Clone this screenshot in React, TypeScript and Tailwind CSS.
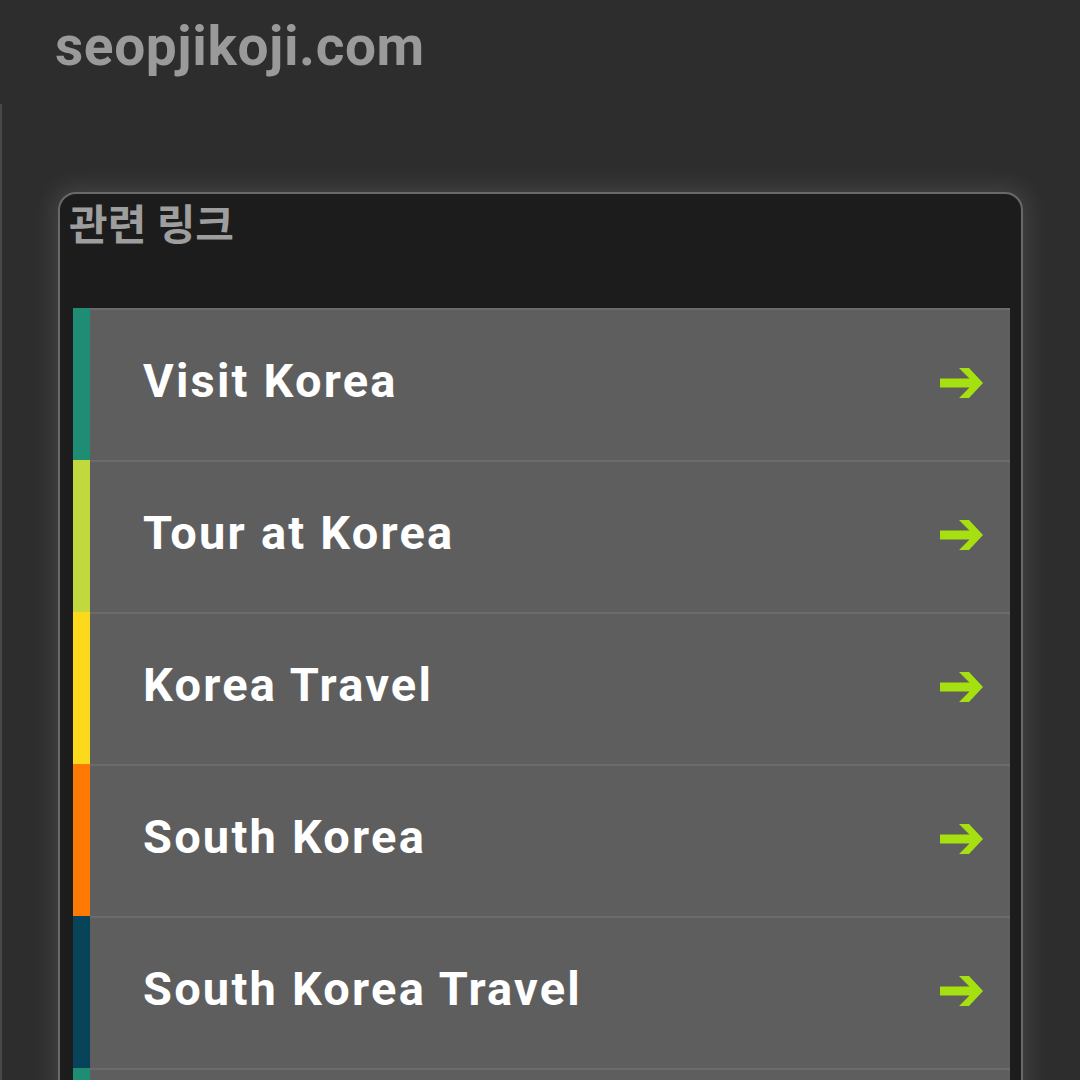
import React from "react";

interface LinkItem {
  label: string;
  stripe: string;
}

const links: LinkItem[] = [
  { label: "Visit Korea", stripe: "bg-[#1f8c74]" },
  { label: "Tour at Korea", stripe: "bg-[#c1d93c]" },
  { label: "Korea Travel", stripe: "bg-[#fdd91c]" },
  { label: "South Korea", stripe: "bg-[#ff7a05]" },
  { label: "South Korea Travel", stripe: "bg-[#07445a]" },
  { label: "Korea Tourism", stripe: "bg-[#1f8c74]" },
];

const Arrow = () => (
  <svg width="43" height="30" viewBox="0 0 43 30" aria-hidden="true">
    <polygon
      points="0,10.5 29.5,10.5 19,0 29,0 43,15 29,30 19,30 29.5,19.5 0,19.5"
      fill="#a6e010"
    />
  </svg>
);

const LinkRow: React.FC<{ item: LinkItem }> = ({ item }) => (
  <a href="#" className="flex h-[152px]">
    <div className={`w-[17px] shrink-0 ${item.stripe}`} />
    <div className="flex flex-1 items-center justify-between border-t-2 border-[#6b6b6b] bg-[#5e5e5e] pl-[53px] pr-[27px]">
      <span className="text-[47px] font-bold text-white leading-none tracking-[2.2px] pb-[9px]">
        {item.label}
      </span>
      <div className="pb-[4px]">
        <Arrow />
      </div>
    </div>
  </a>
);

export default function App() {
  return (
    <div
      className="w-[1080px] h-[1080px] overflow-hidden bg-[#2d2d2d]"
      style={{ fontFamily: "Roboto, 'Noto Sans CJK KR', sans-serif" }}
    >
      <header className="h-[104px] pl-[55px] pt-[19px]">
        <h1 className="text-[55px] font-bold leading-none tracking-[0.6px] text-[#9a9a9a]">
          seopjikoji.com
        </h1>
      </header>

      <main className="h-full border-l-2 border-[#484848] pl-[56px] pt-[88px]">
        <section className="w-[965px] rounded-[18px] border-2 border-[#696969] bg-[#1c1c1c] shadow-[0_0_22px_6px_rgba(255,255,255,0.1)]">
          <div className="h-[114px] pl-[9px] pt-[6px]">
            <h2 className="text-[42px] font-bold leading-tight text-[#9e9e9e]">
              관련 링크
            </h2>
          </div>
          <div className="flex flex-col pl-[13px] pr-[11px]">
            {links.map((item) => (
              <LinkRow key={item.label} item={item} />
            ))}
          </div>
        </section>
      </main>
    </div>
  );
}
